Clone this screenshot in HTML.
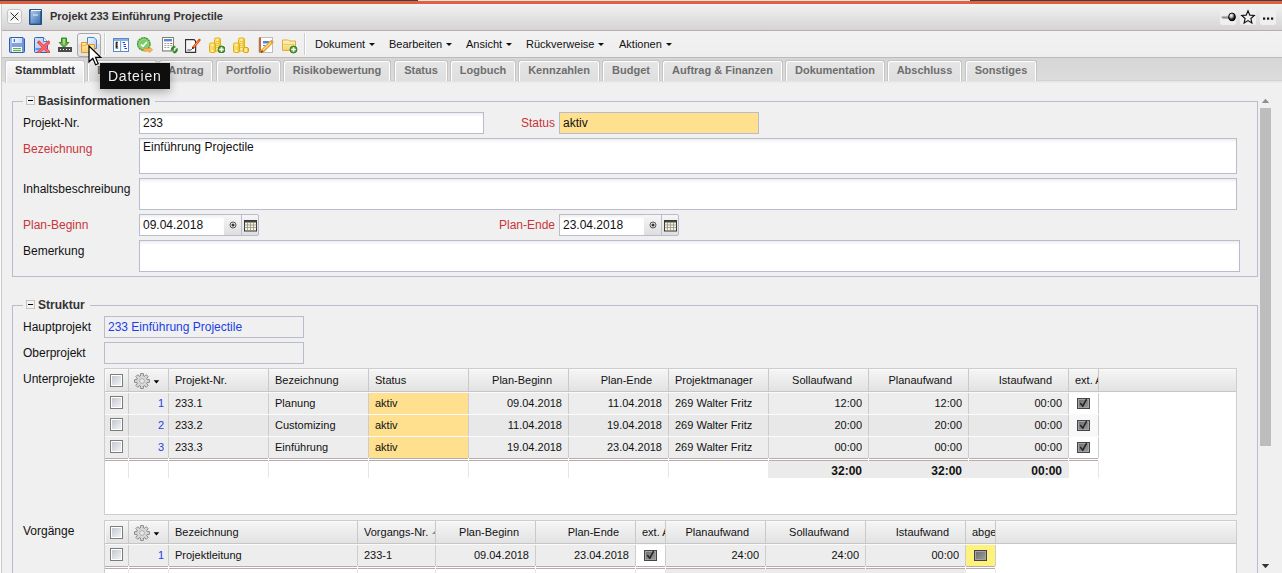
<!DOCTYPE html><html><head><meta charset="utf-8"><style>
*{box-sizing:border-box;margin:0;padding:0}
html,body{width:1282px;height:573px;overflow:hidden;background:#f0f0f0;font-family:"Liberation Sans",sans-serif;font-size:12px;color:#111}
.a{position:absolute}
.tab{position:absolute;top:60px;height:21px;border:1px solid #c4c4c4;border-bottom:none;border-radius:3px 3px 0 0;background:linear-gradient(#e6e6e6,#dedede);box-shadow:inset 1px 1px 0 #fff,inset -1px 0 0 #fff;font-weight:bold;color:#6e6e6e;font-size:11px;line-height:19px;text-align:center}
.tab.act{background:linear-gradient(#fbfbfb,#e7e7e7);color:#333;height:23px;border-color:#c8c8c8}
.lbl{position:absolute;font-size:12px;color:#111;white-space:nowrap}
.red{color:#c8353a}
.inp{position:absolute;background:#fff;border:1px solid #b9bccd;box-shadow:inset 0 3px 3px -1px rgba(0,0,0,0.07)}
.inp span{position:absolute;white-space:nowrap}
.fs{position:absolute;border:1px solid #b9bccd}
.leg{position:absolute;background:#f0f0f0;font-weight:bold;font-size:12px;color:#333;padding:0 5px 0 3px;white-space:nowrap}
.coll{display:inline-block;width:9px;height:9px;border:1px solid #c4c4c4;background:#f4f4f4;position:relative;top:0px;margin-right:3px}
.coll:after{content:"";position:absolute;left:1px;top:3px;width:5px;height:1px;background:#000}
.gc{position:absolute;font-size:11px;white-space:nowrap;overflow:hidden}
.menu{position:absolute;top:38px;font-size:11px;color:#111;white-space:nowrap}
.menu i{display:inline-block;width:0;height:0;border-left:3px solid transparent;border-right:3px solid transparent;border-top:3px solid #111;margin-left:4px;vertical-align:2px}
.cb{position:absolute;width:13px;height:13px;border:1px solid #7c7c7c;background:linear-gradient(135deg,#bfc4cc,#f6f6f6);box-shadow:inset 0 0 0 1px #fff}
.cbc{position:absolute;width:13px;height:11px;border:1px solid #44444c;background:linear-gradient(135deg,#6e6e6e,#9a9a9a);box-shadow:inset 0 0 0 1px #a4a4a4}
</style></head><body>
<div class="a" style="left:0;top:0;width:1282px;height:4px;background:#e25f3f"></div>
<div class="a" style="left:0;top:0;width:1282px;height:1px;background:#3d4048"></div>
<div class="a" style="left:418px;top:0;width:552px;height:1px;background:#e4e4e4"></div>
<div class="a" style="left:0;top:4px;width:1282px;height:27px;background:linear-gradient(#f2f2f2,#d4d4d4);border-bottom:1px solid #baaca9"></div>
<div class="a" style="left:0;top:31px;width:1282px;height:27px;background:linear-gradient(#f2f2f2,#eeeeee);border-bottom:1px solid #c2b8b6"></div>
<div class="a" style="left:0;top:58px;width:1282px;height:23px;background:linear-gradient(#d6d6d6,#dcdcdc)"></div>
<div class="a" style="left:0;top:80px;width:1282px;height:1px;background:#d2d2d2"></div>
<div class="a" style="left:0;top:81px;width:1282px;height:2px;background:linear-gradient(#e4e4e4,#ebebeb)"></div>
<div class="a" style="left:1px;top:4px;width:1px;height:569px;background:#cdcdcd"></div>
<div class="a" style="left:0;top:4px;width:1px;height:569px;background:#fafafa"></div>
<div class="a" style="left:50px;top:10px;font-weight:bold;font-size:11px;color:#333;white-space:nowrap">Projekt 233 Einführung Projectile</div>
<div class="tab act" style="left:5px;width:80px">Stammblatt</div>
<div class="tab" style="left:87px;width:70px">Beteiligte</div>
<div class="tab" style="left:159px;width:54px">Antrag</div>
<div class="tab" style="left:216px;width:65px">Portfolio</div>
<div class="tab" style="left:283px;width:108px">Risikobewertung</div>
<div class="tab" style="left:394px;width:54px">Status</div>
<div class="tab" style="left:450px;width:66px">Logbuch</div>
<div class="tab" style="left:518px;width:82px">Kennzahlen</div>
<div class="tab" style="left:602px;width:58px">Budget</div>
<div class="tab" style="left:662px;width:121px">Auftrag &amp; Finanzen</div>
<div class="tab" style="left:785px;width:100px">Dokumentation</div>
<div class="tab" style="left:887px;width:75px">Abschluss</div>
<div class="tab" style="left:965px;width:72px">Sonstiges</div>
<div class="fs" style="left:12px;top:101px;width:1246px;height:176px"></div>
<div class="leg" style="left:23px;top:94px"><span class="coll"></span>Basisinformationen</div>
<div class="lbl" style="left:23px;top:116px">Projekt-Nr.</div>
<div class="inp" style="left:139px;top:112px;width:345px;height:22px"><span style="left:3px;top:3px">233</span></div>
<div class="lbl red" style="left:521px;top:116px">Status</div>
<div class="inp" style="left:559px;top:112px;width:200px;height:22px;background:#fee08f;box-shadow:none"><span style="left:3px;top:3px">aktiv</span></div>
<div class="lbl red" style="left:23px;top:142px">Bezeichnung</div>
<div class="inp" style="left:139px;top:138px;width:1098px;height:36px"><span style="left:3px;top:1px">Einführung Projectile</span></div>
<div class="lbl" style="left:23px;top:182px">Inhaltsbeschreibung</div>
<div class="inp" style="left:139px;top:178px;width:1098px;height:32px"></div>
<div class="lbl red" style="left:23px;top:218px">Plan-Beginn</div>
<div class="inp" style="left:139px;top:214px;width:86px;height:22px"><span style="left:3px;top:3px">09.04.2018</span></div>
<div class="lbl red" style="left:499px;top:218px">Plan-Ende</div>
<div class="inp" style="left:559px;top:214px;width:86px;height:22px"><span style="left:3px;top:3px">23.04.2018</span></div>
<div class="lbl" style="left:23px;top:244px">Bemerkung</div>
<div class="inp" style="left:139px;top:240px;width:1101px;height:32px"></div>
<div class="fs" style="left:12px;top:305px;width:1246px;height:300px"></div>
<div class="leg" style="left:23px;top:298px"><span class="coll"></span>Struktur</div>
<div class="lbl" style="left:23px;top:320px">Hauptprojekt</div>
<div class="inp" style="left:104px;top:316px;width:200px;height:22px;background:#f0f0f0;box-shadow:none"><span style="left:3px;top:3px;color:#1a3ee8">233 Einführung Projectile</span></div>
<div class="lbl" style="left:23px;top:346px">Oberprojekt</div>
<div class="inp" style="left:104px;top:342px;width:200px;height:22px;background:#f0f0f0;box-shadow:none"></div>
<div class="lbl" style="left:23px;top:372px">Unterprojekte</div>
<div class="lbl" style="left:23px;top:524px">Vorgänge</div>
<div class="a" style="left:7px;top:9px;width:15px;height:15px;border:1px solid #c4c4c4;border-radius:3px;background:linear-gradient(#ffffff,#ececec 50%,#ffffff)"></div>
<svg class="a" style="left:7px;top:9px" width="15" height="15" viewBox="0 0 15 15"><path d="M3.6,3.6 L11.4,11.4 M11.4,3.6 L3.6,11.4" stroke="#2a2a2a" stroke-width="1"/></svg>
<svg class="a" style="left:29px;top:9px" width="14" height="16" viewBox="0 0 14 16"><defs><linearGradient id="bk" x1="0" y1="0" x2="1" y2="1"><stop offset="0" stop-color="#a9c8e8"/><stop offset="1" stop-color="#3d6eae"/></linearGradient></defs><path d="M1,0.5 H12.5 V15.5 H1 Q0.5,15.5 0.5,15 V1 Q0.5,0.5 1,0.5Z" fill="#2f5d9c" stroke="#27508a"/><rect x="1.5" y="2" width="10" height="12.5" fill="url(#bk)"/><rect x="2" y="1" width="10" height="1" fill="#f4f8fc"/><rect x="11.5" y="2" width="1" height="13" fill="#1f4a84"/><rect x="4" y="5.5" width="5" height="1" fill="#eef4fb"/></svg>
<div class="a" style="left:1220px;top:9px;width:16px;height:16px;border-radius:2px;background:#efefef"></div>
<div class="a" style="left:1240px;top:9px;width:16px;height:16px;border-radius:2px;background:#efefef"></div>
<div class="a" style="left:1260px;top:9px;width:16px;height:16px;border-radius:2px;background:#efefef"></div>
<svg class="a" style="left:1220px;top:9px" width="16" height="16" viewBox="0 0 16 16"><defs><radialGradient id="pb" cx="0.38" cy="0.32" r="0.65"><stop offset="0" stop-color="#fff"/><stop offset="0.35" stop-color="#bbb"/><stop offset="0.75" stop-color="#222"/><stop offset="1" stop-color="#000"/></radialGradient><linearGradient id="ps" x1="0" y1="0" x2="0" y2="1"><stop offset="0" stop-color="#d0d0d0"/><stop offset="1" stop-color="#6a6a6a"/></linearGradient></defs><path d="M1,8 L2.8,6.8 H9.5 V9.6 H2.8 Z" fill="url(#ps)"/><ellipse cx="12" cy="7.9" rx="3.4" ry="3.9" fill="url(#pb)" stroke="#000" stroke-width="0.9"/></svg>
<svg class="a" style="left:1240px;top:9px" width="16" height="16" viewBox="0 0 16 16"><path d="M8,1.8 L9.8,6.1 L14.3,6.5 L10.9,9.5 L11.9,14 L8,11.6 L4.1,14 L5.1,9.5 L1.7,6.5 L6.2,6.1 Z" fill="none" stroke="#111" stroke-width="1.15" stroke-linejoin="miter"/></svg>
<svg class="a" style="left:1260px;top:9px" width="16" height="16" viewBox="0 0 16 16"><rect x="3" y="8.5" width="2.2" height="2.2" fill="#111"/><rect x="7" y="8.5" width="2.2" height="2.2" fill="#111"/><rect x="11" y="8.5" width="2.2" height="2.2" fill="#111"/></svg>
<div class="a" style="left:104px;top:33px;width:1px;height:22px;background:#cfcfcf;box-shadow:1px 0 0 #fff"></div>
<div class="a" style="left:304px;top:33px;width:1px;height:22px;background:#cfcfcf;box-shadow:1px 0 0 #fff"></div>
<svg class="a" style="left:9px;top:37px" width="16" height="16" viewBox="0 0 16 16"><defs><linearGradient id="sv" x1="0" y1="0" x2="1" y2="0"><stop offset="0" stop-color="#fff"/><stop offset="1" stop-color="#c9daf3"/></linearGradient></defs><path d="M0.5,1.5 Q0.5,0.5 1.5,0.5 H14 L15.5,2 V14.5 Q15.5,15.5 14.5,15.5 H1.5 Q0.5,15.5 0.5,14.5 Z" fill="#7fa2de" stroke="#2c5fb4"/><rect x="1.5" y="1.5" width="1" height="13" fill="#b8cdf0"/><rect x="13.5" y="1.5" width="1" height="13" fill="#5b86cf"/><rect x="3" y="1" width="10" height="5" fill="url(#sv)"/><rect x="4.7" y="2" width="1.2" height="3" fill="#2c5fb4"/><rect x="3" y="10" width="10" height="5" fill="#fff"/><rect x="4" y="11" width="8" height="1.2" fill="#6cb04e"/><rect x="4" y="13" width="8" height="1.2" fill="#6cb04e"/></svg>
<svg class="a" style="left:34px;top:37px" width="16" height="16" viewBox="0 0 16 16"><defs><linearGradient id="dd" x1="0" y1="0" x2="1" y2="1"><stop offset="0" stop-color="#d6e6fa"/><stop offset="1" stop-color="#9cc4f0"/></linearGradient></defs><path d="M0.5,1.5 Q0.5,0.5 1.5,0.5 H9.5 L13.5,4.5 V15.5 H1.5 Q0.5,15.5 0.5,14.5 Z" fill="url(#dd)" stroke="#2c64b8"/><path d="M9.5,0.5 V4.5 H13.5" fill="#fff" stroke="#2c64b8" stroke-width="0.8"/><rect x="1.5" y="11" width="6" height="2" fill="#41a8f0"/><path d="M5,5.5 L14.5,15 M14.5,5.5 L5,15" stroke="#f0484e" stroke-width="3.2" stroke-linecap="square"/><path d="M5,5.5 L14.5,15 M14.5,5.5 L5,15" stroke="#ff6a6e" stroke-width="1.2"/></svg>
<svg class="a" style="left:57px;top:37px" width="16" height="16" viewBox="0 0 16 16"><path d="M4.5,1 H9.5 V5.5 H11.8 L7,10.5 L2.2,5.5 H4.5 Z" fill="#6fb24c" stroke="#2a8c18" stroke-width="1"/><path d="M6,2 H8 V6 L7,8.5 L6,6Z" fill="#a8d890"/><rect x="1" y="10" width="14" height="5" fill="#4a4a4a"/><rect x="3" y="12" width="1" height="1" fill="#fff"/><rect x="6" y="12" width="1" height="1" fill="#fff"/><rect x="9" y="12" width="1" height="1" fill="#fff"/><rect x="12" y="12" width="1" height="1" fill="#fff"/></svg>
<div class="a" style="left:77px;top:33px;width:24px;height:24px;border:1px solid #a9a9a9;border-radius:3px;background:linear-gradient(#f5f5f5 0%,#ececec 46%,#dcdcdc 47%,#e2e2e2 100%)"></div>
<svg class="a" style="left:80px;top:36px" width="18" height="18" viewBox="0 0 18 18"><defs><linearGradient id="fo" x1="0" y1="0" x2="0" y2="1"><stop offset="0" stop-color="#fbe9a6"/><stop offset="1" stop-color="#f3d26a"/></linearGradient><linearGradient id="fd" x1="0" y1="0" x2="1" y2="1"><stop offset="0" stop-color="#f2f7fd"/><stop offset="1" stop-color="#a9cbf2"/></linearGradient></defs><path d="M7.5,1.5 H14 L16.5,4 V12.5 H7.5 Z" fill="url(#fd)" stroke="#3f86d8"/><path d="M1.5,6.5 H7 V8.5 H14.5 V16.5 H1.5 Z" fill="url(#fo)" stroke="#e6982e"/><path d="M2,10 Q5,9 7,8.8" stroke="#e6a84a" fill="none"/></svg>
<svg class="a" style="left:113px;top:38px" width="16" height="14" viewBox="0 0 16 14"><rect x="0.5" y="0.5" width="15" height="13" fill="#fff" stroke="#5d88c8"/><rect x="1" y="1" width="14" height="2" fill="#8eb0e0"/><rect x="7" y="3" width="1.2" height="10" fill="#7fa3d8"/><path d="M5,4.3 H3.2 V7 H4.8 M3.2,7 V10 H5.2 M3.8,5.7 H4.6 M3.8,8.5 H4.8" stroke="#1a1a1a" stroke-width="1.1" fill="none"/><path d="M9.5,4.5 H12 M10.5,6.5 H13 M10.5,8.5 H13 M11.5,10.5 H14" stroke="#1a3cff" stroke-width="1.1"/></svg>
<svg class="a" style="left:137px;top:37px" width="17" height="17" viewBox="0 0 17 17"><circle cx="6.8" cy="7" r="6.3" fill="#7cc86a" stroke="#2d9a1e" stroke-width="1.2" stroke-dasharray="2 0.6"/><circle cx="6.8" cy="7" r="4.6" fill="none" stroke="#a6dc98" stroke-width="0.6"/><path d="M4,7.3 L6,9.3 L9.8,5" stroke="#fff" stroke-width="1.7" fill="none"/><path d="M6.5,11.5 H12.5 V10 L15.6,12.8 L12.5,15.6 V14.2 H6.5 Z" fill="#f2b861" stroke="#e2922a" stroke-width="0.7"/></svg>
<svg class="a" style="left:162px;top:37px" width="16" height="17" viewBox="0 0 16 17"><rect x="0.5" y="0.5" width="11" height="13.5" fill="#fff" stroke="#808080"/><rect x="1" y="13" width="10.5" height="1.2" fill="#aaa"/><rect x="2" y="2" width="8" height="2.4" fill="#5a8ad4"/><rect x="2.2" y="6" width="2.2" height="1.1" rx="0.5" fill="#a0a0a0"/><rect x="5.2" y="6" width="2.2" height="1.1" rx="0.5" fill="#a0a0a0"/><rect x="8.2" y="6" width="2.2" height="1.1" rx="0.5" fill="#e63a3a"/><rect x="2.2" y="8" width="2.2" height="1.1" rx="0.5" fill="#a0a0a0"/><rect x="5.2" y="8" width="2.2" height="1.1" rx="0.5" fill="#a0a0a0"/><rect x="8.2" y="8" width="2.2" height="1.1" rx="0.5" fill="#a0a0a0"/><rect x="2.2" y="10" width="2.2" height="1.1" rx="0.5" fill="#a0a0a0"/><rect x="5.2" y="10" width="2.2" height="1.1" rx="0.5" fill="#a0a0a0"/><path d="M10,13.5 A2.8,2.8 0 0 1 12.5,9.8" stroke="#2f8a1f" stroke-width="2.2" fill="none"/><path d="M14.5,11.5 A2.8,2.8 0 0 1 12,15.3" stroke="#2f8a1f" stroke-width="2.2" fill="none"/><path d="M12.2,8.6 L14,10 L12.2,11.3Z M12.3,16.5 L10.5,15 L12.3,13.8Z" fill="#2f8a1f"/></svg>
<svg class="a" style="left:185px;top:38px" width="16" height="16" viewBox="0 0 16 16"><path d="M0.6,1.6 H9 L10.6,3.2 V14.4 H0.6 Z" fill="#fff" stroke="#333" stroke-width="1.2"/><rect x="1.5" y="3" width="5" height="10" fill="#f4f4f4"/><path d="M2.3,12 H5.5 Q6.8,11.8 7.5,10.5" stroke="#333" fill="none" stroke-width="0.9"/><path d="M8.2,9.6 L14.4,2" stroke="#e8431c" stroke-width="2.4" stroke-linecap="round"/><path d="M8.6,9 L13.8,2.6" stroke="#ffb52e" stroke-width="0.9"/><path d="M7.4,10.6 L8.4,9.5" stroke="#222" stroke-width="1.4"/></svg>
<svg class="a" style="left:209px;top:37px" width="16" height="16" viewBox="0 0 16 16"><defs><linearGradient id="cg209" x1="0" y1="0" x2="1" y2="0"><stop offset="0" stop-color="#f9d64a"/><stop offset="0.5" stop-color="#fff2b0"/><stop offset="1" stop-color="#e9b212"/></linearGradient></defs><rect x="5.5" y="1" width="6" height="13" rx="1.5" fill="url(#cg209)" stroke="#e6b00c"/><path d="M6.5,4.5 H10.5 M6.5,6.5 H10.5 M6.5,8.5 H10.5 M6.5,10.5 H10.5" stroke="#e8b820" stroke-width="0.8"/><rect x="0.5" y="6" width="6" height="9.5" rx="1.5" fill="url(#cg209)" stroke="#e6b00c"/><path d="M1.5,10 H5.5 M1.5,12 H5.5" stroke="#e8c030" stroke-width="0.8"/><circle cx="12.5" cy="12.5" r="3.5" fill="#4f9e36" stroke="#2b7a1c" stroke-width="0.9"/><rect x="11.7" y="10.3" width="1.6" height="4.4" fill="#fff"/><rect x="10.3" y="11.7" width="4.4" height="1.6" fill="#fff"/></svg>
<svg class="a" style="left:233px;top:37px" width="16" height="16" viewBox="0 0 16 16"><defs><linearGradient id="cg233" x1="0" y1="0" x2="1" y2="0"><stop offset="0" stop-color="#f9d64a"/><stop offset="0.5" stop-color="#fff2b0"/><stop offset="1" stop-color="#e9b212"/></linearGradient></defs><rect x="5.5" y="1" width="6" height="13" rx="1.5" fill="url(#cg233)" stroke="#e6b00c"/><path d="M6.5,4.5 H10.5 M6.5,6.5 H10.5 M6.5,8.5 H10.5 M6.5,10.5 H10.5" stroke="#e8b820" stroke-width="0.8"/><rect x="0.5" y="6" width="6" height="9.5" rx="1.5" fill="url(#cg233)" stroke="#e6b00c"/><path d="M1.5,10 H5.5 M1.5,12 H5.5" stroke="#e8c030" stroke-width="0.8"/><rect x="10.5" y="10.5" width="5" height="5" rx="1.5" fill="url(#cg233)" stroke="#e6a00c"/></svg>
<svg class="a" style="left:258px;top:37px" width="16" height="16" viewBox="0 0 16 16"><rect x="1.5" y="0.5" width="13" height="15" fill="#fff" stroke="#bdbdbd"/><rect x="1" y="0.5" width="2" height="15" fill="#d0622a"/><path d="M0,2 H2 M0,4 H2 M0,6 H2 M0,8 H2 M0,10 H2 M0,12 H2 M0,14 H2" stroke="#999" stroke-width="0.6"/><rect x="5" y="4" width="6" height="2.5" fill="#4f86dc"/><rect x="5" y="8" width="2.5" height="1" fill="#4f86dc"/><path d="M4,14.5 L13.5,5" stroke="#e39a38" stroke-width="3.8" stroke-linecap="round"/><path d="M4.5,13.5 L13,5.5" stroke="#f8e070" stroke-width="1.6"/><path d="M3,15.5 L4.8,13.7" stroke="#6b4a20" stroke-width="1.5"/></svg>
<svg class="a" style="left:282px;top:39px" width="16" height="15" viewBox="0 0 16 15"><defs><linearGradient id="fp" x1="0" y1="0" x2="0" y2="1"><stop offset="0" stop-color="#fdf3c8"/><stop offset="1" stop-color="#f4d45e"/></linearGradient></defs><path d="M0.5,1 H6.5 L7.5,2 H13.5 V11.5 H0.5 Z" fill="url(#fp)" stroke="#e6ac3a"/><path d="M1.5,5.5 H12.5" stroke="#e8c060" stroke-width="0.8"/><circle cx="11.5" cy="10.5" r="3.5" fill="#4f9e36" stroke="#2b7a1c" stroke-width="0.9"/><rect x="10.7" y="8.3" width="1.6" height="4.4" fill="#fff"/><rect x="9.3" y="9.7" width="4.4" height="1.6" fill="#fff"/></svg>
<div class="menu" style="left:315px">Dokument<i></i></div>
<div class="menu" style="left:389px">Bearbeiten<i></i></div>
<div class="menu" style="left:466px">Ansicht<i></i></div>
<div class="menu" style="left:526px">Rückverweise<i></i></div>
<div class="menu" style="left:619px">Aktionen<i></i></div>
<div class="a" style="left:224px;top:214px;width:18px;height:22px;border:1px solid #b9bccd;border-left:none;background:linear-gradient(#f6f6f6,#dedede)"></div>
<div class="a" style="left:241px;top:214px;width:18px;height:22px;border:1px solid #b9bccd;border-radius:0 2px 2px 0;background:linear-gradient(#f6f6f6,#dedede)"></div>
<svg class="a" style="left:229px;top:221px" width="8" height="8" viewBox="0 0 8 8"><circle cx="4" cy="4" r="3" fill="none" stroke="#555" stroke-width="1"/><circle cx="4" cy="4" r="1.5" fill="#333"/></svg>
<svg class="a" style="left:244px;top:220px" width="13" height="12" viewBox="0 0 13 12"><rect x="0.5" y="0.5" width="12" height="10.5" fill="#f6f2d6" stroke="#333"/><rect x="0.5" y="0.5" width="12" height="2" fill="#444"/><path d="M3.5,2.5 V11 M6.5,2.5 V11 M9.5,2.5 V11 M0.5,5 H12.5 M0.5,7.5 H12.5" stroke="#888" stroke-width="0.7"/></svg>
<div class="a" style="left:644px;top:214px;width:18px;height:22px;border:1px solid #b9bccd;border-left:none;background:linear-gradient(#f6f6f6,#dedede)"></div>
<div class="a" style="left:661px;top:214px;width:18px;height:22px;border:1px solid #b9bccd;border-radius:0 2px 2px 0;background:linear-gradient(#f6f6f6,#dedede)"></div>
<svg class="a" style="left:649px;top:221px" width="8" height="8" viewBox="0 0 8 8"><circle cx="4" cy="4" r="3" fill="none" stroke="#555" stroke-width="1"/><circle cx="4" cy="4" r="1.5" fill="#333"/></svg>
<svg class="a" style="left:664px;top:220px" width="13" height="12" viewBox="0 0 13 12"><rect x="0.5" y="0.5" width="12" height="10.5" fill="#f6f2d6" stroke="#333"/><rect x="0.5" y="0.5" width="12" height="2" fill="#444"/><path d="M3.5,2.5 V11 M6.5,2.5 V11 M9.5,2.5 V11 M0.5,5 H12.5 M0.5,7.5 H12.5" stroke="#888" stroke-width="0.7"/></svg>
<div class="a" style="left:104px;top:368px;width:1133px;height:147px;background:#fff;border:1px solid #cdcdcd"></div>
<div class="a" style="left:105px;top:369px;width:1131px;height:23px;background:linear-gradient(#f6f6f6,#e2e2e2);border-bottom:1px solid #c6c6c6;box-shadow:inset 1px 1px 0 #fafafa"></div>
<div class="a" style="left:128px;top:369px;width:1px;height:22px;background:#c9c9c9"></div>
<div class="a" style="left:168px;top:369px;width:1px;height:22px;background:#c9c9c9"></div>
<div class="a" style="left:268px;top:369px;width:1px;height:22px;background:#c9c9c9"></div>
<div class="a" style="left:368px;top:369px;width:1px;height:22px;background:#c9c9c9"></div>
<div class="a" style="left:468px;top:369px;width:1px;height:22px;background:#c9c9c9"></div>
<div class="a" style="left:568px;top:369px;width:1px;height:22px;background:#c9c9c9"></div>
<div class="a" style="left:668px;top:369px;width:1px;height:22px;background:#c9c9c9"></div>
<div class="a" style="left:768px;top:369px;width:1px;height:22px;background:#c9c9c9"></div>
<div class="a" style="left:868px;top:369px;width:1px;height:22px;background:#c9c9c9"></div>
<div class="a" style="left:968px;top:369px;width:1px;height:22px;background:#c9c9c9"></div>
<div class="a" style="left:1068px;top:369px;width:1px;height:22px;background:#c9c9c9"></div>
<div class="a" style="left:1098px;top:369px;width:1px;height:22px;background:#c9c9c9"></div>
<div class="cb" style="left:110px;top:374px"></div>
<svg class="a" style="left:134px;top:373px" width="16" height="16" viewBox="0 0 16 16"><defs><radialGradient id="gg" cx="0.5" cy="0.5" r="0.6"><stop offset="0" stop-color="#e6e6e6"/><stop offset="0.6" stop-color="#d2d2d2"/><stop offset="1" stop-color="#e8e8e8"/></radialGradient></defs><path d="M6.38,3.00 L6.70,0.50 L9.30,0.50 L9.62,3.00 L10.39,3.32 L12.38,1.78 L14.22,3.62 L12.68,5.61 L13.00,6.38 L15.50,6.70 L15.50,9.30 L13.00,9.62 L12.68,10.39 L14.22,12.38 L12.38,14.22 L10.39,12.68 L9.62,13.00 L9.30,15.50 L6.70,15.50 L6.38,13.00 L5.61,12.68 L3.62,14.22 L1.78,12.38 L3.32,10.39 L3.00,9.62 L0.50,9.30 L0.50,6.70 L3.00,6.38 L3.32,5.61 L1.78,3.62 L3.62,1.78 L5.61,3.32Z" fill="url(#gg)" stroke="#7c7c7c" stroke-width="0.85" stroke-linejoin="round"/><circle cx="8" cy="8" r="2.4" fill="#ececec" stroke="#9a9a9a" stroke-width="0.8"/></svg>
<svg class="a" style="left:153px;top:379px" width="8" height="6" viewBox="0 0 8 6"><path d="M0.7,1.3 H6.2 L3.45,4.4Z" fill="#000"/></svg>
<div class="gc" style="left:175px;top:374px;width:93px;text-align:left">Projekt-Nr.</div>
<div class="gc" style="left:275px;top:374px;width:93px;text-align:left">Bezeichnung</div>
<div class="gc" style="left:375px;top:374px;width:93px;text-align:left">Status</div>
<div class="gc" style="left:469px;top:374px;width:83px;text-align:right">Plan-Beginn</div>
<div class="gc" style="left:569px;top:374px;width:83px;text-align:right">Plan-Ende</div>
<div class="gc" style="left:675px;top:374px;width:93px;text-align:left">Projektmanager</div>
<div class="gc" style="left:769px;top:374px;width:83px;text-align:right">Sollaufwand</div>
<div class="gc" style="left:869px;top:374px;width:83px;text-align:right">Planaufwand</div>
<div class="gc" style="left:969px;top:374px;width:83px;text-align:right">Istaufwand</div>
<div class="gc" style="left:1075px;top:374px;width:23px;text-align:left">ext. Auftrag</div>
<div class="a" style="left:105px;top:392px;width:993px;height:22px;background:#ededed;border-top:1px solid #fafafa"></div>
<div class="cb" style="left:110px;top:396px"></div>
<div class="gc" style="left:129px;top:397px;width:35px;text-align:right;color:#1f40e4">1</div>
<div class="gc" style="left:175px;top:397px;width:93px">233.1</div>
<div class="gc" style="left:275px;top:397px;width:93px">Planung</div>
<div class="a" style="left:369px;top:393px;width:99px;height:21px;background:#fee08f"></div>
<div class="gc" style="left:375px;top:397px;width:93px">aktiv</div>
<div class="gc" style="left:469px;top:397px;width:93px;text-align:right;color:#111">09.04.2018</div>
<div class="gc" style="left:569px;top:397px;width:93px;text-align:right;color:#111">11.04.2018</div>
<div class="gc" style="left:675px;top:397px;width:93px">269 Walter Fritz</div>
<div class="gc" style="left:769px;top:397px;width:93px;text-align:right;color:#111">12:00</div>
<div class="gc" style="left:869px;top:397px;width:93px;text-align:right;color:#111">12:00</div>
<div class="gc" style="left:969px;top:397px;width:93px;text-align:right;color:#111">00:00</div>
<div class="a" style="left:1069px;top:393px;width:29px;height:21px;background:#ffffff"></div>
<div class="cbc" style="left:1077px;top:398px"></div>
<svg class="a" style="left:1077px;top:398px" width="13" height="11" viewBox="0 0 13 11"><path d="M3.6,5.6 L5.8,8.2 L9.3,1.6" stroke="#222" stroke-width="1.5" fill="none" stroke-linecap="round"/></svg>
<div class="a" style="left:128px;top:393px;width:1px;height:21px;background:#cdcdcd"></div>
<div class="a" style="left:168px;top:393px;width:1px;height:21px;background:#cdcdcd"></div>
<div class="a" style="left:268px;top:393px;width:1px;height:21px;background:#cdcdcd"></div>
<div class="a" style="left:368px;top:393px;width:1px;height:21px;background:#cdcdcd"></div>
<div class="a" style="left:468px;top:393px;width:1px;height:21px;background:#cdcdcd"></div>
<div class="a" style="left:568px;top:393px;width:1px;height:21px;background:#cdcdcd"></div>
<div class="a" style="left:668px;top:393px;width:1px;height:21px;background:#cdcdcd"></div>
<div class="a" style="left:768px;top:393px;width:1px;height:21px;background:#cdcdcd"></div>
<div class="a" style="left:868px;top:393px;width:1px;height:21px;background:#cdcdcd"></div>
<div class="a" style="left:968px;top:393px;width:1px;height:21px;background:#cdcdcd"></div>
<div class="a" style="left:1068px;top:393px;width:1px;height:21px;background:#cdcdcd"></div>
<div class="a" style="left:1098px;top:393px;width:1px;height:21px;background:#cdcdcd"></div>
<div class="a" style="left:105px;top:414px;width:993px;height:22px;background:#e8e8e8;border-top:1px solid #fafafa"></div>
<div class="cb" style="left:110px;top:418px"></div>
<div class="gc" style="left:129px;top:419px;width:35px;text-align:right;color:#1f40e4">2</div>
<div class="gc" style="left:175px;top:419px;width:93px">233.2</div>
<div class="gc" style="left:275px;top:419px;width:93px">Customizing</div>
<div class="a" style="left:369px;top:415px;width:99px;height:21px;background:#fee08f"></div>
<div class="gc" style="left:375px;top:419px;width:93px">aktiv</div>
<div class="gc" style="left:469px;top:419px;width:93px;text-align:right;color:#111">11.04.2018</div>
<div class="gc" style="left:569px;top:419px;width:93px;text-align:right;color:#111">19.04.2018</div>
<div class="gc" style="left:675px;top:419px;width:93px">269 Walter Fritz</div>
<div class="gc" style="left:769px;top:419px;width:93px;text-align:right;color:#111">20:00</div>
<div class="gc" style="left:869px;top:419px;width:93px;text-align:right;color:#111">20:00</div>
<div class="gc" style="left:969px;top:419px;width:93px;text-align:right;color:#111">00:00</div>
<div class="a" style="left:1069px;top:415px;width:29px;height:21px;background:#f8f8f8"></div>
<div class="cbc" style="left:1077px;top:420px"></div>
<svg class="a" style="left:1077px;top:420px" width="13" height="11" viewBox="0 0 13 11"><path d="M3.6,5.6 L5.8,8.2 L9.3,1.6" stroke="#222" stroke-width="1.5" fill="none" stroke-linecap="round"/></svg>
<div class="a" style="left:128px;top:415px;width:1px;height:21px;background:#cdcdcd"></div>
<div class="a" style="left:168px;top:415px;width:1px;height:21px;background:#cdcdcd"></div>
<div class="a" style="left:268px;top:415px;width:1px;height:21px;background:#cdcdcd"></div>
<div class="a" style="left:368px;top:415px;width:1px;height:21px;background:#cdcdcd"></div>
<div class="a" style="left:468px;top:415px;width:1px;height:21px;background:#cdcdcd"></div>
<div class="a" style="left:568px;top:415px;width:1px;height:21px;background:#cdcdcd"></div>
<div class="a" style="left:668px;top:415px;width:1px;height:21px;background:#cdcdcd"></div>
<div class="a" style="left:768px;top:415px;width:1px;height:21px;background:#cdcdcd"></div>
<div class="a" style="left:868px;top:415px;width:1px;height:21px;background:#cdcdcd"></div>
<div class="a" style="left:968px;top:415px;width:1px;height:21px;background:#cdcdcd"></div>
<div class="a" style="left:1068px;top:415px;width:1px;height:21px;background:#cdcdcd"></div>
<div class="a" style="left:1098px;top:415px;width:1px;height:21px;background:#cdcdcd"></div>
<div class="a" style="left:105px;top:436px;width:993px;height:22px;background:#ededed;border-top:1px solid #fafafa"></div>
<div class="cb" style="left:110px;top:440px"></div>
<div class="gc" style="left:129px;top:441px;width:35px;text-align:right;color:#1f40e4">3</div>
<div class="gc" style="left:175px;top:441px;width:93px">233.3</div>
<div class="gc" style="left:275px;top:441px;width:93px">Einführung</div>
<div class="a" style="left:369px;top:437px;width:99px;height:21px;background:#fee08f"></div>
<div class="gc" style="left:375px;top:441px;width:93px">aktiv</div>
<div class="gc" style="left:469px;top:441px;width:93px;text-align:right;color:#111">19.04.2018</div>
<div class="gc" style="left:569px;top:441px;width:93px;text-align:right;color:#111">23.04.2018</div>
<div class="gc" style="left:675px;top:441px;width:93px">269 Walter Fritz</div>
<div class="gc" style="left:769px;top:441px;width:93px;text-align:right;color:#111">00:00</div>
<div class="gc" style="left:869px;top:441px;width:93px;text-align:right;color:#111">00:00</div>
<div class="gc" style="left:969px;top:441px;width:93px;text-align:right;color:#111">00:00</div>
<div class="a" style="left:1069px;top:437px;width:29px;height:21px;background:#ffffff"></div>
<div class="cbc" style="left:1077px;top:442px"></div>
<svg class="a" style="left:1077px;top:442px" width="13" height="11" viewBox="0 0 13 11"><path d="M3.6,5.6 L5.8,8.2 L9.3,1.6" stroke="#222" stroke-width="1.5" fill="none" stroke-linecap="round"/></svg>
<div class="a" style="left:128px;top:437px;width:1px;height:21px;background:#cdcdcd"></div>
<div class="a" style="left:168px;top:437px;width:1px;height:21px;background:#cdcdcd"></div>
<div class="a" style="left:268px;top:437px;width:1px;height:21px;background:#cdcdcd"></div>
<div class="a" style="left:368px;top:437px;width:1px;height:21px;background:#cdcdcd"></div>
<div class="a" style="left:468px;top:437px;width:1px;height:21px;background:#cdcdcd"></div>
<div class="a" style="left:568px;top:437px;width:1px;height:21px;background:#cdcdcd"></div>
<div class="a" style="left:668px;top:437px;width:1px;height:21px;background:#cdcdcd"></div>
<div class="a" style="left:768px;top:437px;width:1px;height:21px;background:#cdcdcd"></div>
<div class="a" style="left:868px;top:437px;width:1px;height:21px;background:#cdcdcd"></div>
<div class="a" style="left:968px;top:437px;width:1px;height:21px;background:#cdcdcd"></div>
<div class="a" style="left:1068px;top:437px;width:1px;height:21px;background:#cdcdcd"></div>
<div class="a" style="left:1098px;top:437px;width:1px;height:21px;background:#cdcdcd"></div>
<div class="a" style="left:105px;top:458px;width:23px;height:3px;border-top:1px solid #b8abab;border-bottom:1px solid #b8abab"></div>
<div class="a" style="left:129px;top:458px;width:39px;height:3px;border-top:1px solid #b8abab;border-bottom:1px solid #b8abab"></div>
<div class="a" style="left:169px;top:458px;width:99px;height:3px;border-top:1px solid #b8abab;border-bottom:1px solid #b8abab"></div>
<div class="a" style="left:269px;top:458px;width:99px;height:3px;border-top:1px solid #b8abab;border-bottom:1px solid #b8abab"></div>
<div class="a" style="left:369px;top:458px;width:99px;height:3px;border-top:1px solid #b8abab;border-bottom:1px solid #b8abab"></div>
<div class="a" style="left:469px;top:458px;width:99px;height:3px;border-top:1px solid #b8abab;border-bottom:1px solid #b8abab"></div>
<div class="a" style="left:569px;top:458px;width:99px;height:3px;border-top:1px solid #b8abab;border-bottom:1px solid #b8abab"></div>
<div class="a" style="left:669px;top:458px;width:99px;height:3px;border-top:1px solid #b8abab;border-bottom:1px solid #b8abab"></div>
<div class="a" style="left:769px;top:458px;width:99px;height:3px;border-top:1px solid #b8abab;border-bottom:1px solid #b8abab"></div>
<div class="a" style="left:869px;top:458px;width:99px;height:3px;border-top:1px solid #b8abab;border-bottom:1px solid #b8abab"></div>
<div class="a" style="left:969px;top:458px;width:99px;height:3px;border-top:1px solid #b8abab;border-bottom:1px solid #b8abab"></div>
<div class="a" style="left:1069px;top:458px;width:29px;height:3px;border-top:1px solid #b8abab;border-bottom:1px solid #b8abab"></div>
<div class="a" style="left:128px;top:461px;width:1px;height:17px;background:#e6e6e6"></div>
<div class="a" style="left:168px;top:461px;width:1px;height:17px;background:#e6e6e6"></div>
<div class="a" style="left:268px;top:461px;width:1px;height:17px;background:#e6e6e6"></div>
<div class="a" style="left:368px;top:461px;width:1px;height:17px;background:#e6e6e6"></div>
<div class="a" style="left:468px;top:461px;width:1px;height:17px;background:#e6e6e6"></div>
<div class="a" style="left:568px;top:461px;width:1px;height:17px;background:#e6e6e6"></div>
<div class="a" style="left:668px;top:461px;width:1px;height:17px;background:#e6e6e6"></div>
<div class="a" style="left:768px;top:461px;width:1px;height:17px;background:#e6e6e6"></div>
<div class="a" style="left:868px;top:461px;width:1px;height:17px;background:#e6e6e6"></div>
<div class="a" style="left:968px;top:461px;width:1px;height:17px;background:#e6e6e6"></div>
<div class="a" style="left:1068px;top:461px;width:1px;height:17px;background:#e6e6e6"></div>
<div class="a" style="left:1098px;top:461px;width:1px;height:17px;background:#e6e6e6"></div>
<div class="a" style="left:768px;top:461px;width:101px;height:17px;background:#ebebeb"></div>
<div class="gc" style="left:769px;top:464px;width:93px;text-align:right;font-weight:bold;font-size:12px">32:00</div>
<div class="a" style="left:868px;top:461px;width:101px;height:17px;background:#ebebeb"></div>
<div class="gc" style="left:869px;top:464px;width:93px;text-align:right;font-weight:bold;font-size:12px">32:00</div>
<div class="a" style="left:968px;top:461px;width:101px;height:17px;background:#ebebeb"></div>
<div class="gc" style="left:969px;top:464px;width:93px;text-align:right;font-weight:bold;font-size:12px">00:00</div>
<div class="a" style="left:104px;top:520px;width:1133px;height:80px;background:#fff;border:1px solid #cdcdcd"></div>
<div class="a" style="left:105px;top:521px;width:1131px;height:23px;background:linear-gradient(#f6f6f6,#e2e2e2);border-bottom:1px solid #c6c6c6;box-shadow:inset 1px 1px 0 #fafafa"></div>
<div class="a" style="left:128px;top:521px;width:1px;height:22px;background:#c9c9c9"></div>
<div class="a" style="left:168px;top:521px;width:1px;height:22px;background:#c9c9c9"></div>
<div class="a" style="left:357px;top:521px;width:1px;height:22px;background:#c9c9c9"></div>
<div class="a" style="left:435px;top:521px;width:1px;height:22px;background:#c9c9c9"></div>
<div class="a" style="left:535px;top:521px;width:1px;height:22px;background:#c9c9c9"></div>
<div class="a" style="left:635px;top:521px;width:1px;height:22px;background:#c9c9c9"></div>
<div class="a" style="left:665px;top:521px;width:1px;height:22px;background:#c9c9c9"></div>
<div class="a" style="left:765px;top:521px;width:1px;height:22px;background:#c9c9c9"></div>
<div class="a" style="left:865px;top:521px;width:1px;height:22px;background:#c9c9c9"></div>
<div class="a" style="left:965px;top:521px;width:1px;height:22px;background:#c9c9c9"></div>
<div class="a" style="left:995px;top:521px;width:1px;height:22px;background:#c9c9c9"></div>
<div class="cb" style="left:110px;top:526px"></div>
<svg class="a" style="left:134px;top:525px" width="16" height="16" viewBox="0 0 16 16"><defs><radialGradient id="gg" cx="0.5" cy="0.5" r="0.6"><stop offset="0" stop-color="#e6e6e6"/><stop offset="0.6" stop-color="#d2d2d2"/><stop offset="1" stop-color="#e8e8e8"/></radialGradient></defs><path d="M6.38,3.00 L6.70,0.50 L9.30,0.50 L9.62,3.00 L10.39,3.32 L12.38,1.78 L14.22,3.62 L12.68,5.61 L13.00,6.38 L15.50,6.70 L15.50,9.30 L13.00,9.62 L12.68,10.39 L14.22,12.38 L12.38,14.22 L10.39,12.68 L9.62,13.00 L9.30,15.50 L6.70,15.50 L6.38,13.00 L5.61,12.68 L3.62,14.22 L1.78,12.38 L3.32,10.39 L3.00,9.62 L0.50,9.30 L0.50,6.70 L3.00,6.38 L3.32,5.61 L1.78,3.62 L3.62,1.78 L5.61,3.32Z" fill="url(#gg)" stroke="#7c7c7c" stroke-width="0.85" stroke-linejoin="round"/><circle cx="8" cy="8" r="2.4" fill="#ececec" stroke="#9a9a9a" stroke-width="0.8"/></svg>
<svg class="a" style="left:153px;top:531px" width="8" height="6" viewBox="0 0 8 6"><path d="M0.7,1.3 H6.2 L3.45,4.4Z" fill="#000"/></svg>
<div class="gc" style="left:175px;top:526px;width:182px;text-align:left">Bezeichnung</div>
<div class="gc" style="left:364px;top:526px;width:71px;text-align:left">Vorgangs-Nr.</div>
<div class="gc" style="left:436px;top:526px;width:83px;text-align:right">Plan-Beginn</div>
<div class="gc" style="left:536px;top:526px;width:83px;text-align:right">Plan-Ende</div>
<div class="gc" style="left:642px;top:526px;width:23px;text-align:left">ext. Auftrag</div>
<div class="gc" style="left:666px;top:526px;width:83px;text-align:right">Planaufwand</div>
<div class="gc" style="left:766px;top:526px;width:83px;text-align:right">Sollaufwand</div>
<div class="gc" style="left:866px;top:526px;width:83px;text-align:right">Istaufwand</div>
<div class="gc" style="left:972px;top:526px;width:23px;text-align:left">abgeschlossen</div>
<div class="a" style="left:105px;top:544px;width:890px;height:22px;background:#ededed;border-top:1px solid #fafafa"></div>
<div class="cb" style="left:110px;top:548px"></div>
<div class="gc" style="left:129px;top:549px;width:35px;text-align:right;color:#1f40e4">1</div>
<div class="gc" style="left:175px;top:549px;width:182px">Projektleitung</div>
<div class="gc" style="left:364px;top:549px;width:71px">233-1</div>
<div class="gc" style="left:436px;top:549px;width:93px;text-align:right;color:#111">09.04.2018</div>
<div class="gc" style="left:536px;top:549px;width:93px;text-align:right;color:#111">23.04.2018</div>
<div class="a" style="left:636px;top:545px;width:29px;height:21px;background:#ffffff"></div>
<div class="cbc" style="left:644px;top:550px"></div>
<svg class="a" style="left:644px;top:550px" width="13" height="11" viewBox="0 0 13 11"><path d="M3.6,5.6 L5.8,8.2 L9.3,1.6" stroke="#222" stroke-width="1.5" fill="none" stroke-linecap="round"/></svg>
<div class="gc" style="left:666px;top:549px;width:93px;text-align:right;color:#111">24:00</div>
<div class="gc" style="left:766px;top:549px;width:93px;text-align:right;color:#111">24:00</div>
<div class="gc" style="left:866px;top:549px;width:93px;text-align:right;color:#111">00:00</div>
<div class="a" style="left:966px;top:545px;width:29px;height:21px;background:#fff27c"></div>
<div class="cbc" style="left:974px;top:550px;background:linear-gradient(135deg,#6a6a6a,#a0a0a0)"></div>
<div class="a" style="left:128px;top:545px;width:1px;height:21px;background:#cdcdcd"></div>
<div class="a" style="left:168px;top:545px;width:1px;height:21px;background:#cdcdcd"></div>
<div class="a" style="left:357px;top:545px;width:1px;height:21px;background:#cdcdcd"></div>
<div class="a" style="left:435px;top:545px;width:1px;height:21px;background:#cdcdcd"></div>
<div class="a" style="left:535px;top:545px;width:1px;height:21px;background:#cdcdcd"></div>
<div class="a" style="left:635px;top:545px;width:1px;height:21px;background:#cdcdcd"></div>
<div class="a" style="left:665px;top:545px;width:1px;height:21px;background:#cdcdcd"></div>
<div class="a" style="left:765px;top:545px;width:1px;height:21px;background:#cdcdcd"></div>
<div class="a" style="left:865px;top:545px;width:1px;height:21px;background:#cdcdcd"></div>
<div class="a" style="left:965px;top:545px;width:1px;height:21px;background:#cdcdcd"></div>
<div class="a" style="left:995px;top:545px;width:1px;height:21px;background:#cdcdcd"></div>
<div class="a" style="left:105px;top:566px;width:23px;height:3px;border-top:1px solid #b8abab;border-bottom:1px solid #b8abab"></div>
<div class="a" style="left:129px;top:566px;width:39px;height:3px;border-top:1px solid #b8abab;border-bottom:1px solid #b8abab"></div>
<div class="a" style="left:169px;top:566px;width:188px;height:3px;border-top:1px solid #b8abab;border-bottom:1px solid #b8abab"></div>
<div class="a" style="left:358px;top:566px;width:77px;height:3px;border-top:1px solid #b8abab;border-bottom:1px solid #b8abab"></div>
<div class="a" style="left:436px;top:566px;width:99px;height:3px;border-top:1px solid #b8abab;border-bottom:1px solid #b8abab"></div>
<div class="a" style="left:536px;top:566px;width:99px;height:3px;border-top:1px solid #b8abab;border-bottom:1px solid #b8abab"></div>
<div class="a" style="left:636px;top:566px;width:29px;height:3px;border-top:1px solid #b8abab;border-bottom:1px solid #b8abab"></div>
<div class="a" style="left:666px;top:566px;width:99px;height:3px;border-top:1px solid #b8abab;border-bottom:1px solid #b8abab"></div>
<div class="a" style="left:766px;top:566px;width:99px;height:3px;border-top:1px solid #b8abab;border-bottom:1px solid #b8abab"></div>
<div class="a" style="left:866px;top:566px;width:99px;height:3px;border-top:1px solid #b8abab;border-bottom:1px solid #b8abab"></div>
<div class="a" style="left:966px;top:566px;width:29px;height:3px;border-top:1px solid #b8abab;border-bottom:1px solid #b8abab"></div>
<div class="a" style="left:128px;top:569px;width:1px;height:17px;background:#e6e6e6"></div>
<div class="a" style="left:168px;top:569px;width:1px;height:17px;background:#e6e6e6"></div>
<div class="a" style="left:357px;top:569px;width:1px;height:17px;background:#e6e6e6"></div>
<div class="a" style="left:435px;top:569px;width:1px;height:17px;background:#e6e6e6"></div>
<div class="a" style="left:535px;top:569px;width:1px;height:17px;background:#e6e6e6"></div>
<div class="a" style="left:635px;top:569px;width:1px;height:17px;background:#e6e6e6"></div>
<div class="a" style="left:665px;top:569px;width:1px;height:17px;background:#e6e6e6"></div>
<div class="a" style="left:765px;top:569px;width:1px;height:17px;background:#e6e6e6"></div>
<div class="a" style="left:865px;top:569px;width:1px;height:17px;background:#e6e6e6"></div>
<div class="a" style="left:965px;top:569px;width:1px;height:17px;background:#e6e6e6"></div>
<div class="a" style="left:995px;top:569px;width:1px;height:17px;background:#e6e6e6"></div>
<div class="a" style="left:665px;top:569px;width:101px;height:17px;background:#ebebeb"></div>
<div class="a" style="left:765px;top:569px;width:101px;height:17px;background:#ebebeb"></div>
<div class="a" style="left:865px;top:569px;width:101px;height:17px;background:#ebebeb"></div>
<div class="a" style="left:432px;top:531px;width:0;height:0;border-left:3px solid transparent;border-bottom:3px solid #8a8a8a"></div>
<svg class="a" style="left:1260px;top:97px" width="12" height="8" viewBox="0 0 12 8"><path d="M1.8,6 H9.2 L5.5,1.8Z" fill="#8f8f8f"/></svg>
<div class="a" style="left:1260px;top:108px;width:11px;height:338px;background:#bdbdbd"></div>
<svg class="a" style="left:1260px;top:562px" width="12" height="8" viewBox="0 0 12 8"><path d="M1.8,2 H9.2 L5.5,6.2Z" fill="#333"/></svg>
<div class="a" style="left:100px;top:63px;width:70px;height:26px;background:#0e0e0e;box-shadow:0 3px 10px rgba(0,0,0,0.3)"></div>
<div class="a" style="left:108px;top:68px;font-size:14px;letter-spacing:0.75px;color:#f0f0f0;white-space:nowrap;will-change:transform">Dateien</div>
<svg class="a" style="left:88px;top:45px" width="14" height="22" viewBox="0 0 14 22"><path d="M1,1 V17 L4.8,13.3 L7.6,19.8 L10.2,18.7 L7.5,12.3 L12.6,12.3 Z" fill="#fff" stroke="#000" stroke-width="1.2" stroke-linejoin="miter"/></svg>
</body></html>
